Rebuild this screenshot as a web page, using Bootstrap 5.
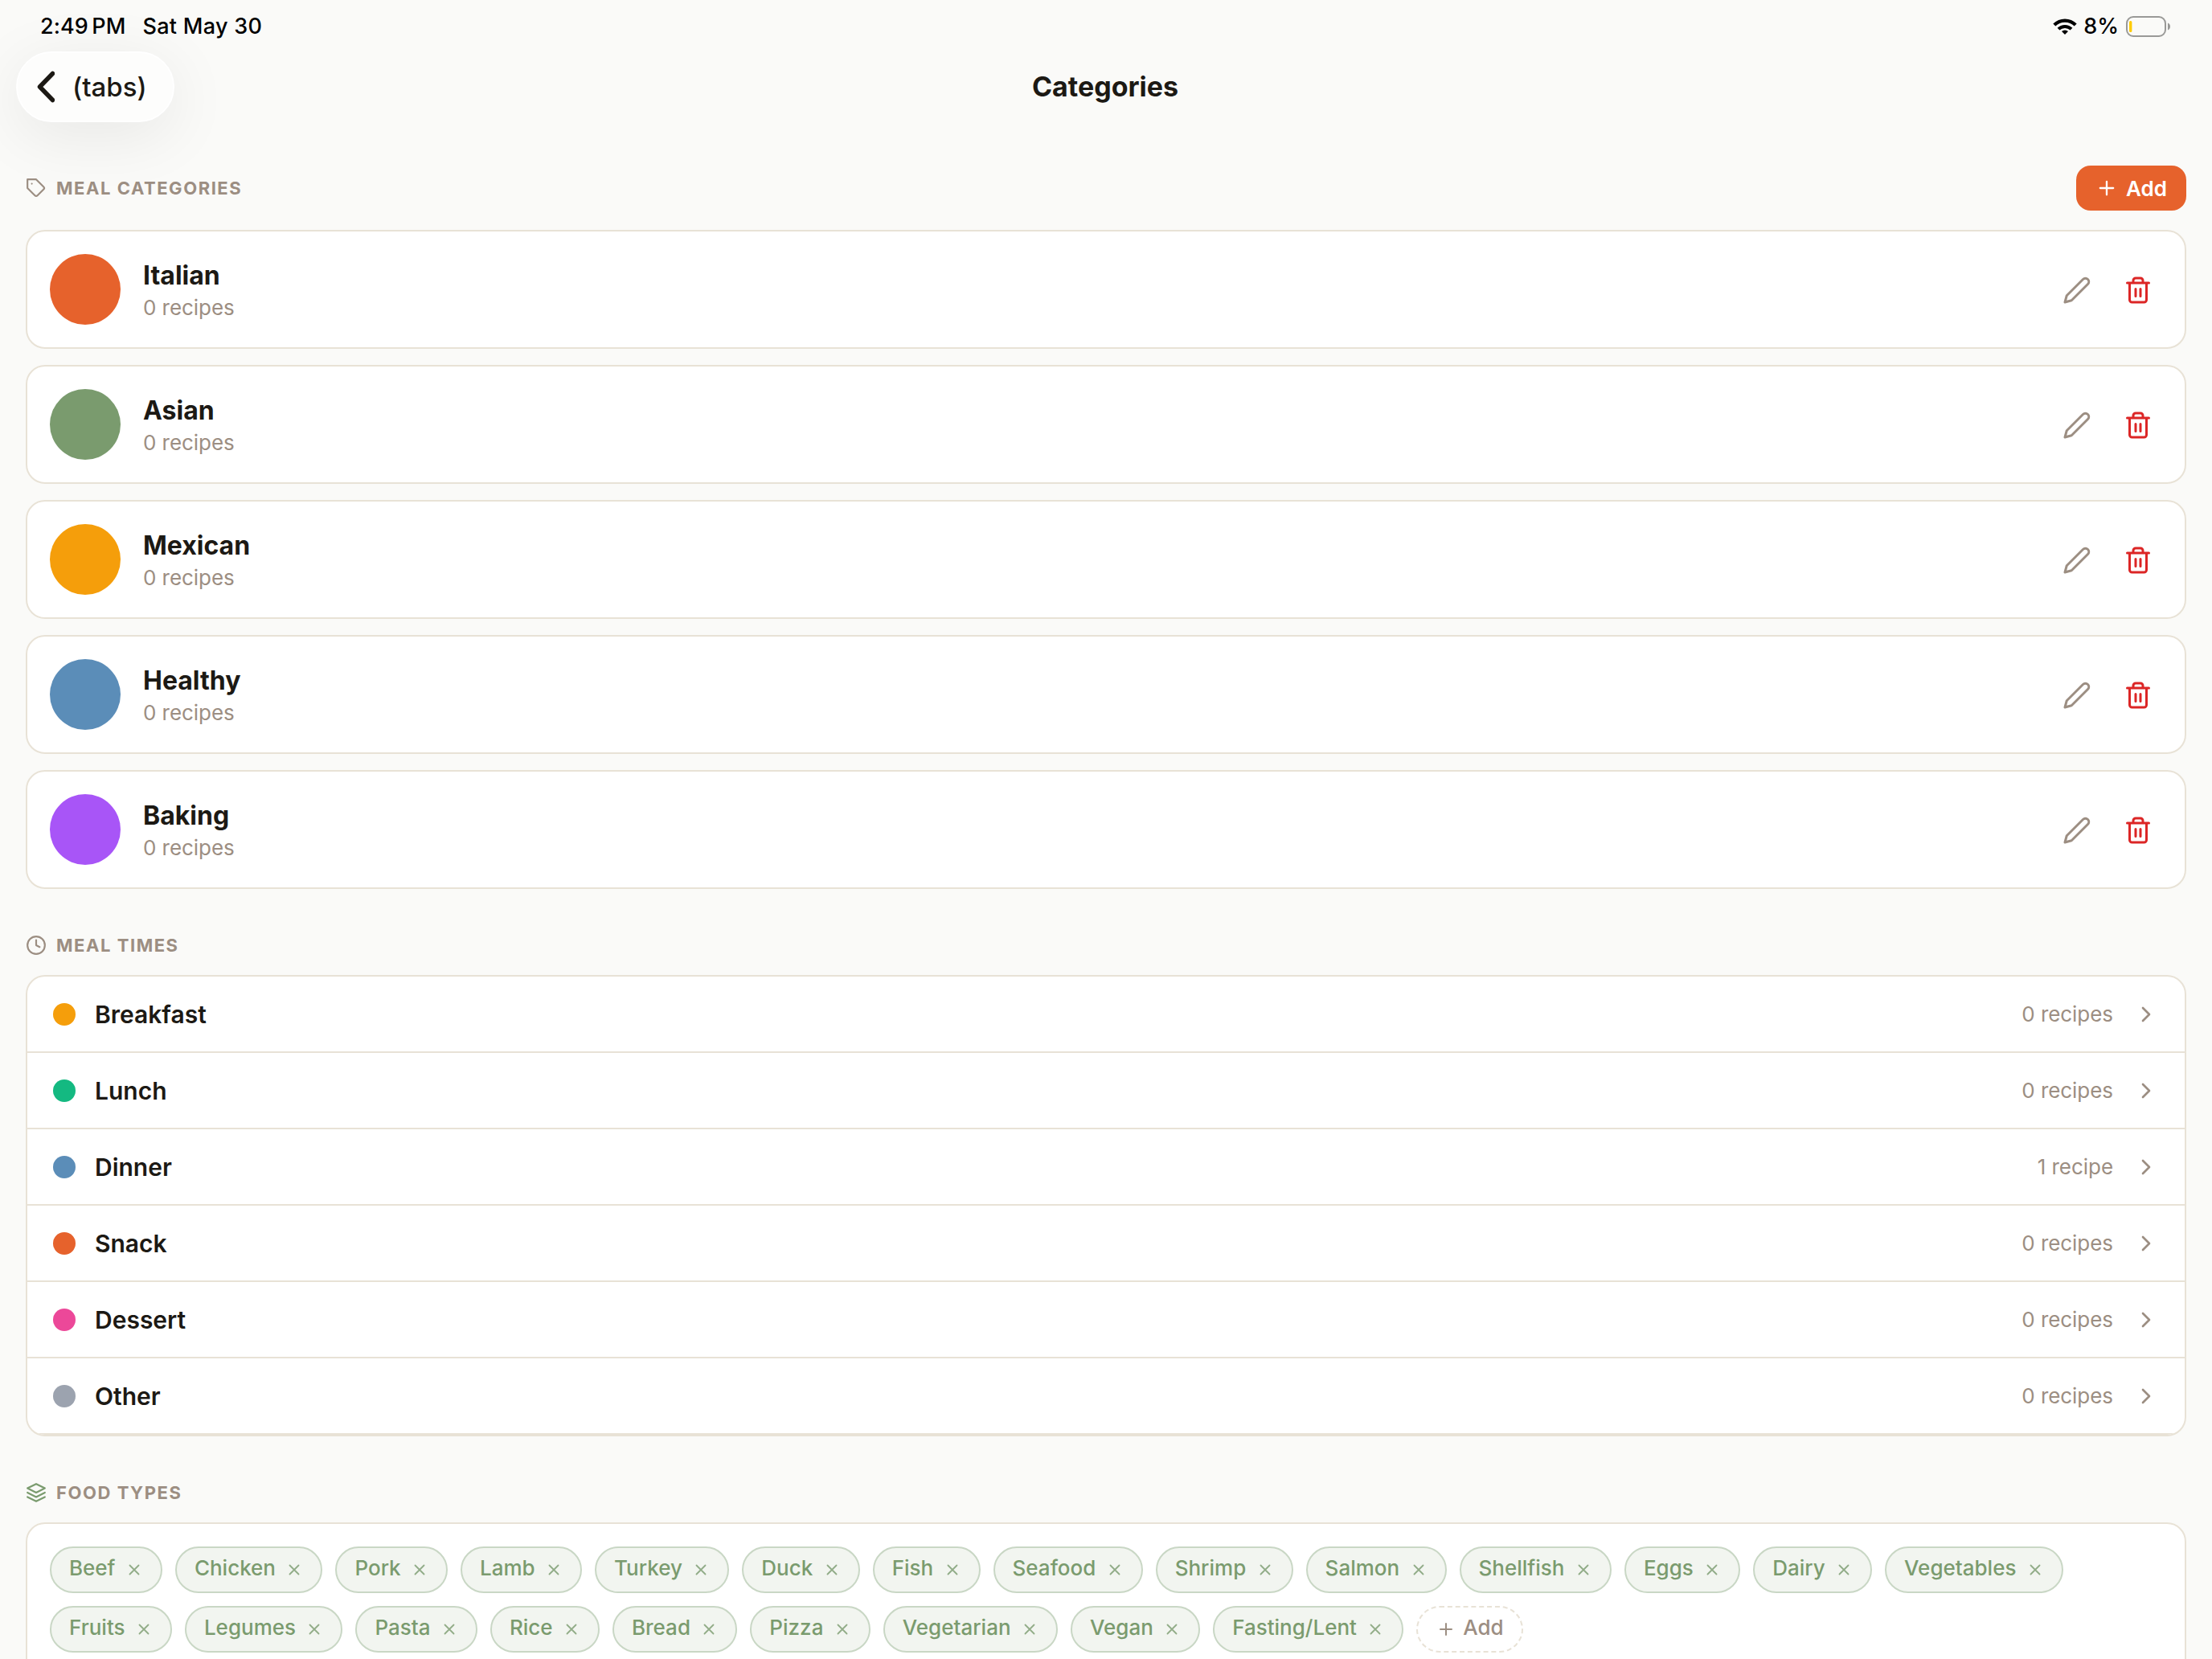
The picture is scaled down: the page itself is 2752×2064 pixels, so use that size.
<!DOCTYPE html>
<html lang="en">
<head>
  <meta charset="UTF-8">
  <meta name="viewport" content="width=device-width, initial-scale=1.0">
  <title>Categories</title>
  <link rel="stylesheet" href="https://cdn.jsdelivr.net/npm/bootstrap@5.3.0/dist/css/bootstrap.min.css">
  <style>
    :root {
      --ink: #1c1914;
      --muted: #9c8e82;
      --line: #e8e2d6;
      --accent: #e6622c;
      --sage: #7a9b6e;
    }
    body {
      height: 2064px;
      overflow: hidden;
      background: #fafaf8;
      color: var(--ink);
      font-family: Inter, "Liberation Sans", sans-serif;
      font-size: 26px;
      line-height: 32px;
    }
    svg {
      flex: none;
      fill: none;
      stroke: currentColor;
      stroke-width: 2;
      stroke-linecap: round;
      stroke-linejoin: round;
    }

    /* status bar */
    .status-bar {
      height: 64px;
      padding: 1px 51px 0 50px;
      color: #000;
      font-size: 27px;
      font-weight: 500;
    }
    .status-time { letter-spacing: .1px; word-spacing: -3px; }
    .status-date { margin-left: 21px; letter-spacing: .3px; }
    .status-wifi { stroke-linecap: butt; }
    .status-battery { margin-left: 9px; }

    /* top navigation */
    .top-nav { height: 88px; padding: 0 20px; }
    .nav-side { width: 197px; }
    .back-btn {
      height: 88px;
      padding: 0 0 0 24px;
      gap: 22px;
      border: 2px solid #fff;
      border-radius: 44px;
      background: #fdfdfc;
      color: var(--ink);
      font-size: 33px;
      font-weight: 500;
      box-shadow: 0 16px 80px rgba(0, 0, 0, .08);
    }
    .back-arrow { stroke-width: 5.5; }
    .page-title { margin-right: 2px; font-size: 34px; font-weight: 700; line-height: 42px; }

    /* sections */
    .page-body { padding: 54px 32px 0; }
    .section-label {
      gap: 12px;
      color: var(--muted);
      font-size: 22px;
      font-weight: 700;
      line-height: 28px;
      letter-spacing: 1.55px;
    }
    .add-btn {
      height: 56px;
      padding: 0 24px;
      gap: 10px;
      border: 0;
      border-radius: 18px;
      background: var(--accent);
      color: #fff;
      font-size: 26px;
      font-weight: 600;
    }
    .add-btn span { padding-top: 1px; }
    .panel {
      border: 2px solid var(--line);
      border-radius: 24px;
      background: #fff;
      overflow: hidden;
    }

    /* category cards */
    .category-list { gap: 20px; margin-top: 24px; }
    .category-card { height: 148px; padding: 0 40px 0 28px; }
    .swatch { width: 88px; height: 88px; margin-right: 28px; }
    .category-text { padding-top: 2px; }
    .category-name { margin-bottom: 4px; font-size: 32px; font-weight: 700; line-height: 40px; }
    .text-soft { color: var(--muted); letter-spacing: -.05px; }
    .card-actions { gap: 40px; padding-top: 2px; }
    .icon-delete { color: #dc2626; }

    /* meal times */
    .times-label { margin: 56px 0 23px; }
    .time-row { height: 95px; padding: 0 32px; border-bottom: 2px solid var(--line); }
    .time-dot { width: 28px; height: 28px; margin-right: 24px; }
    .time-name { font-size: 30px; font-weight: 600; }
    .time-count { gap: 25px; }

    /* food types */
    .foods-label { margin: 56px 0 23px; }
    .foods-label svg { color: var(--sage); }
    .chip-box { height: 220px; padding: 28px; gap: 16px; }
    .chip {
      height: 58px;
      padding: 0 22px;
      gap: 12.4px;
      border: 2px solid #c9d7c5;
      border-radius: 29px;
      background: #f2f5f0;
      color: var(--sage);
      font-weight: 500;
    }
    .chip span { padding-bottom: 5px; }
    .chip svg { opacity: .8; }
    .chip-new {
      padding-left: 23px;
      gap: 9px;
      border: 2px dashed var(--line);
      background: #fff;
      color: var(--muted);
    }
    .chip-new svg { opacity: 1; }
  </style>
</head>
<body>
  <svg class="d-none">
    <symbol id="i-tag" viewBox="0 0 24 24"><path d="M20.59 13.41l-7.17 7.17a2 2 0 0 1-2.83 0L2 12V2h10l8.59 8.59a2 2 0 0 1 0 2.82z"/><path d="M7 7h.01"/></symbol>
    <symbol id="i-clock" viewBox="0 0 24 24"><circle cx="12" cy="12" r="10"/><path d="M12 6v6l4 2"/></symbol>
    <symbol id="i-layers" viewBox="0 0 24 24"><path d="M12 2L2 7l10 5 10-5-10-5z"/><path d="M2 17l10 5 10-5"/><path d="M2 12l10 5 10-5"/></symbol>
    <symbol id="i-plus" viewBox="0 0 24 24"><path d="M12 5v14M5 12h14"/></symbol>
    <symbol id="i-x" viewBox="0 0 24 24"><path d="M18 6L6 18M6 6l12 12"/></symbol>
    <symbol id="i-chevron" viewBox="0 0 24 24"><path d="M9 18l6-6-6-6"/></symbol>
    <symbol id="i-pencil" viewBox="0 0 24 24"><path d="M17 3a2.828 2.828 0 1 1 4 4L7.5 20.5 2 22l1.5-5.5L17 3z"/></symbol>
    <symbol id="i-trash" viewBox="0 0 24 24"><path d="M3 6h18M19 6v14a2 2 0 0 1-2 2H7a2 2 0 0 1-2-2V6M8 6V4a2 2 0 0 1 2-2h4a2 2 0 0 1 2 2v2M10 11v6M14 11v6"/></symbol>
  </svg>

  <div class="status-bar d-flex align-items-center justify-content-between">
    <div class="d-flex">
      <span class="status-time">2:49 PM</span>
      <span class="status-date">Sat May 30</span>
    </div>
    <div class="d-flex align-items-center">
      <svg class="status-wifi me-2" width="30" height="20" viewBox="0 0 30 20">
        <path d="M1.8 8.1a18.6 18.6 0 0 1 26.4 0" stroke-width="4.2"/>
        <path d="M7 13.2a11.3 11.3 0 0 1 16 0" stroke-width="4"/>
        <path d="M15 20l-4-3.9a5.8 5.8 0 0 1 8 0z" fill="#000" stroke="none"/>
      </svg>
      <span>8%</span>
      <svg class="status-battery" width="56" height="26" viewBox="0 0 56 26">
        <rect x="1" y="1" width="48" height="24" rx="8" stroke="#999997"/>
        <rect x="4" y="6" width="3.4" height="14" rx="1.5" fill="#fc0" stroke="none"/>
        <path d="M52 8.5c4 1.5 4 7.500 0 9z" fill="#999997" stroke="none"/>
      </svg>
    </div>
  </div>

  <nav class="top-nav d-flex align-items-center justify-content-between">
    <button class="back-btn nav-side d-flex align-items-center">
      <svg class="back-arrow" width="22" height="40" viewBox="0 0 22 40"><path d="M19.500 3.500L3.500 20l16 16.500"/></svg>
      <span>(tabs)</span>
    </button>
    <div class="page-title">Categories</div>
    <div class="nav-side"></div>
  </nav>

  <main class="page-body">
    <div class="d-flex align-items-center justify-content-between">
      <div class="section-label d-flex align-items-center">
        <svg width="26" height="26"><use href="#i-tag"/></svg>
        <span>MEAL CATEGORIES</span>
      </div>
      <button class="add-btn d-flex align-items-center">
        <svg width="28" height="28"><use href="#i-plus"/></svg>
        <span>Add</span>
      </button>
    </div>
    <div id="category-list" class="category-list d-flex flex-column"></div>

    <div class="section-label times-label d-flex align-items-center">
      <svg width="26" height="26"><use href="#i-clock"/></svg>
      <span>MEAL TIMES</span>
    </div>
    <div id="time-list" class="panel"></div>

    <div class="section-label foods-label d-flex align-items-center">
      <svg width="26" height="26"><use href="#i-layers"/></svg>
      <span>FOOD TYPES</span>
    </div>
    <div id="food-list" class="panel chip-box d-flex flex-wrap align-content-start"></div>
  </main>

  <script src="https://cdn.jsdelivr.net/npm/bootstrap@5.3.0/dist/js/bootstrap.bundle.min.js"></script>
  <script>
    const categories = [
      ['Italian', '#e6622c'],
      ['Asian', '#7a9b6e'],
      ['Mexican', '#f59e0b'],
      ['Healthy', '#5b8db8'],
      ['Baking', '#a855f7']
    ];
    const mealTimes = [
      ['Breakfast', '#f59e0b', '0 recipes'],
      ['Lunch', '#14b981', '0 recipes'],
      ['Dinner', '#5b8db8', '1 recipe'],
      ['Snack', '#e6622c', '0 recipes'],
      ['Dessert', '#ec4899', '0 recipes'],
      ['Other', '#9ca3af', '0 recipes']
    ];
    const foods = ['Beef', 'Chicken', 'Pork', 'Lamb', 'Turkey', 'Duck', 'Fish', 'Seafood', 'Shrimp',
      'Salmon', 'Shellfish', 'Eggs', 'Dairy', 'Vegetables', 'Fruits', 'Legumes', 'Pasta', 'Rice',
      'Bread', 'Pizza', 'Vegetarian', 'Vegan', 'Fasting/Lent'];

    const icon = (name, size) => `<svg width="${size}" height="${size}"><use href="#i-${name}"/></svg>`;

    document.getElementById('category-list').innerHTML = categories.map(([name, color]) => `
      <div class="panel category-card d-flex align-items-center">
        <div class="swatch rounded-circle" style="background: ${color}"></div>
        <div class="category-text flex-grow-1">
          <div class="category-name">${name}</div>
          <div class="text-soft">0 recipes</div>
        </div>
        <div class="card-actions d-flex">
          <span class="text-soft d-flex">${icon('pencil', 36)}</span>
          <span class="icon-delete d-flex">${icon('trash', 36)}</span>
        </div>
      </div>
    `).join('');

    document.getElementById('time-list').innerHTML = mealTimes.map(([name, color, count]) => `
      <div class="time-row d-flex align-items-center">
        <div class="time-dot rounded-circle" style="background: ${color}"></div>
        <div class="time-name flex-grow-1">${name}</div>
        <div class="time-count text-soft d-flex align-items-center">${count} ${icon('chevron', 32)}</div>
      </div>
    `).join('');

    document.getElementById('food-list').innerHTML = foods.map(food => `
      <div class="chip d-flex align-items-center"><span>${food}</span>${icon('x', 22)}</div>
    `).join('') + `
      <div class="chip chip-new d-flex align-items-center">${icon('plus', 24)}<span>Add</span></div>
    `;
  </script>
</body>
</html>
